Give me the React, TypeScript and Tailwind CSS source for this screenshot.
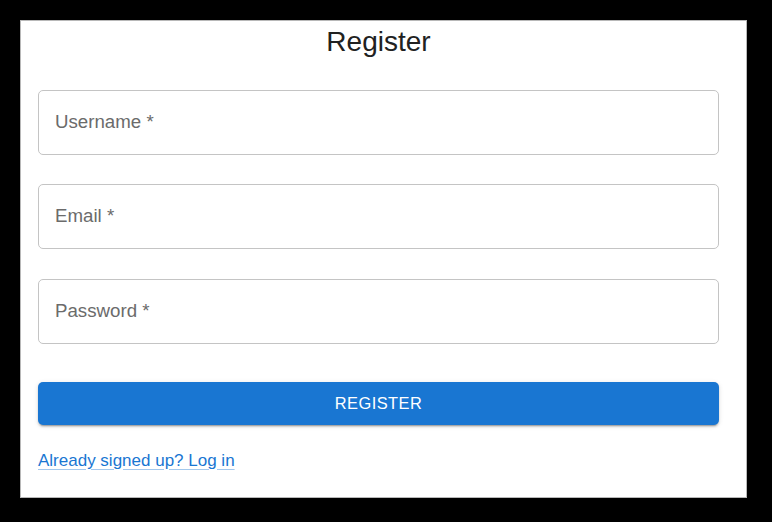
const fields = ['Username *', 'Email *', 'Password *'];

export default function App() {
  return (
    <div
      className="w-[772px] h-[522px] bg-black pt-[20px] pl-[20px]"
      style={{ fontFamily: '"Liberation Sans", Arial, sans-serif' }}
    >
      <div className="w-[727px] h-[478px] bg-white border border-[#b8b8b8] pl-[17px] pt-[5px]">
        <div className="w-[681px] flex flex-col">
          <h1 className="text-center text-[28px] leading-[32px] text-[#212121]">Register</h1>

          <div className="mt-[32px] flex flex-col">
            {fields.map((label, i) => (
              <div
                key={label}
                className={
                  'h-[65px] border border-[#c4c4c4] rounded-[5px] flex items-center px-[16px] text-[18.7px] text-[#6b6b6b] ' +
                  (i === 1 ? 'mt-[29px]' : i === 2 ? 'mt-[30px]' : '')
                }
              >
                {label}
              </div>
            ))}
          </div>

          <button className="mt-[38px] h-[43px] w-full rounded-[5px] bg-[#1976d2] text-white text-[16.4px] tracking-[0.47px] shadow-[0_3px_1px_-2px_rgba(0,0,0,0.2),0_2px_2px_0_rgba(0,0,0,0.14),0_1px_5px_0_rgba(0,0,0,0.12)]">
            REGISTER
          </button>

          <div className="mt-[26px] leading-[20px]">
            <a
              href="#"
              className="text-[17px] text-[#1976d2] underline decoration-[#1976d2]/40 underline-offset-[3px]"
            >
              Already signed up? Log in
            </a>
          </div>
        </div>
      </div>
    </div>
  );
}
